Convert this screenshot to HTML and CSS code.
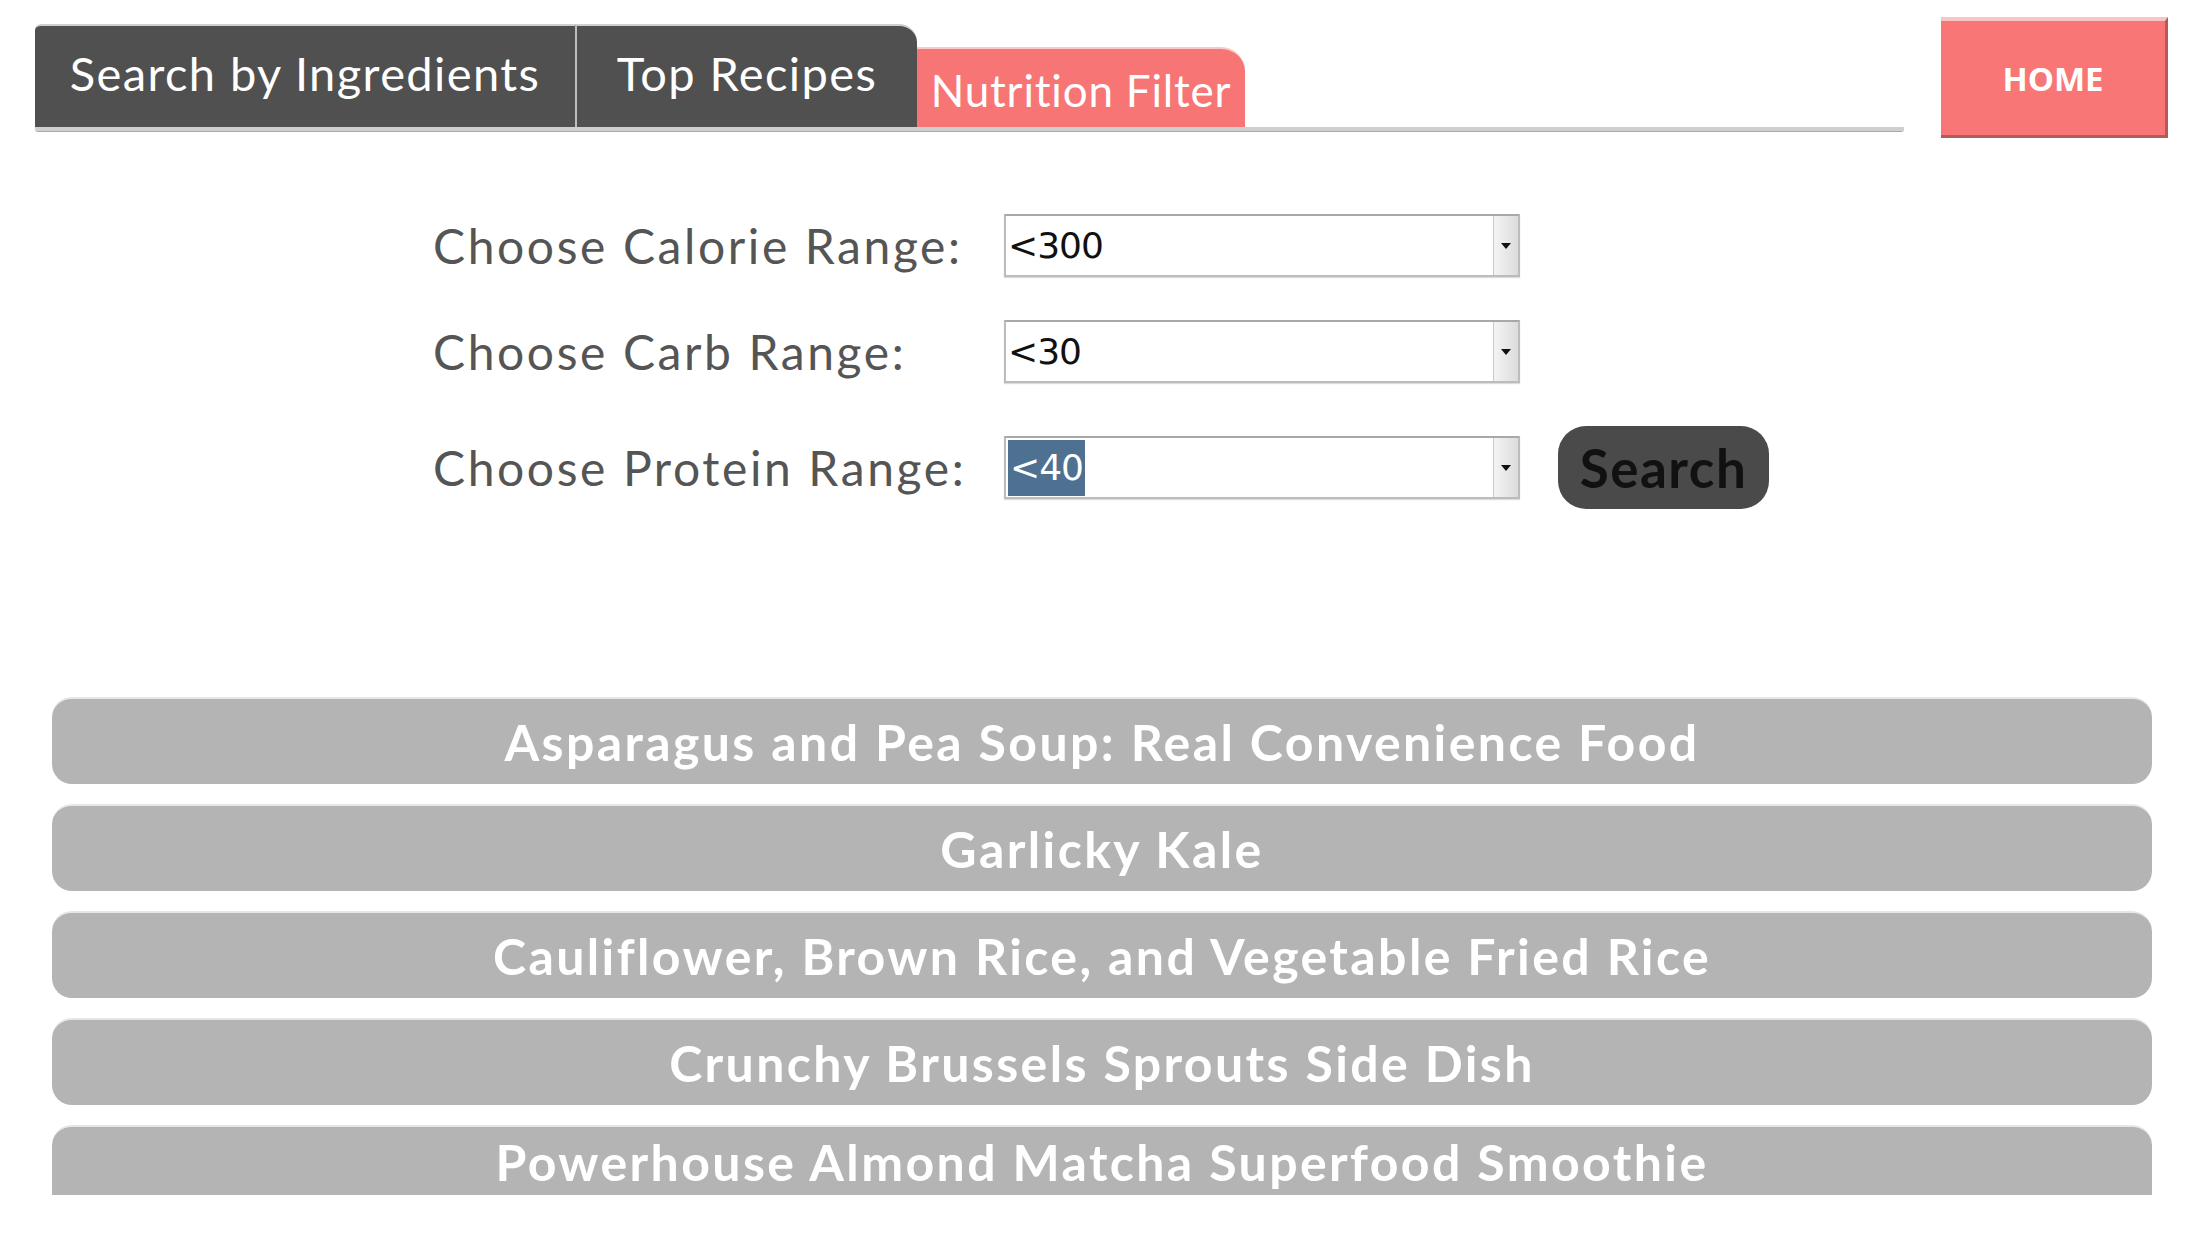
FILE: index.html
```html
<!DOCTYPE html>
<html>
<head>
<meta charset="utf-8">
<link rel="stylesheet" href="styles.css">
</head>
<body>
<div class="page">
  <header class="header">
    <nav class="tabbar">
      <div class="tab tab-dark tab-first">Search by Ingredients</div>
      <div class="tab tab-dark tab-second">Top Recipes</div>
      <div class="tab tab-active">Nutrition Filter</div>
    </nav>
    <button class="home">HOME</button>
  </header>

  <section class="filters">
    <div class="row">
      <label class="label">Choose Calorie Range:</label>
      <div class="select"><span class="value">&lt;300</span><span class="arrow"><span class="tri"></span></span></div>
    </div>
    <div class="row">
      <label class="label">Choose Carb Range:</label>
      <div class="select"><span class="value">&lt;30</span><span class="arrow"><span class="tri"></span></span></div>
    </div>
    <div class="row row-last">
      <label class="label">Choose Protein Range:</label>
      <div class="select"><span class="value"><span class="hl">&lt;40</span></span><span class="arrow"><span class="tri"></span></span></div>
      <button class="search">Search</button>
    </div>
  </section>

  <section class="results">
    <div class="item">Asparagus and Pea Soup: Real Convenience Food</div>
    <div class="item">Garlicky Kale</div>
    <div class="item">Cauliflower, Brown Rice, and Vegetable Fried Rice</div>
    <div class="item">Crunchy Brussels Sprouts Side Dish</div>
    <div class="item item-partial">Powerhouse Almond Matcha Superfood Smoothie</div>
  </section>
</div>
</body>
</html>
```

FILE: styles.css
```css
* { box-sizing: border-box; }
html, body { margin: 0; padding: 0; background: #fff; }
body { font-family: Lato, "Open Sans", sans-serif; width: 2205px; height: 1239px; overflow: hidden; }

.page { display: flex; flex-direction: column; }

.header {
  display: flex;
  align-items: flex-start;
  padding: 17px 37px 0 35px;
  gap: 37px;
}

.tabbar {
  width: 1869px;
  height: 114px;
  display: flex;
  align-items: flex-end;
  padding-top: 7px;
  border-bottom: 4px solid #cfcfcf;
  box-shadow: 0 1px 0 #a9a9a9;
  border-radius: 0 0 3px 3px;
}

.tab {
  color: #fff;
  font-size: 47px;
  font-weight: 400;
  display: flex;
  align-items: center;
  justify-content: center;
  letter-spacing: 1.4px;
}

.tab-dark {
  background: #505050;
  height: 103px;
  border-top: 2px solid #cfcfcf;
  padding-bottom: 8px;
}

.tab-first {
  width: 542px;
  border-radius: 6px 0 0 0;
  border-right: 2px solid #bdbdbd;
}

.tab-second {
  width: 340px;
  border-radius: 0 18px 0 0;
}

.tab-active {
  background: #f87575;
  width: 328px;
  height: 80px;
  border-top: 2px solid #f9c9c9;
  border-radius: 0 24px 0 0;
  padding-top: 4px;
  font-size: 44px;
  letter-spacing: 0.8px;
}

.home {
  width: 227px;
  height: 121px;
  background: #f87676;
  border: none;
  border-top: 4px solid #f9c4c4;
  border-right: 3px solid #b35a5a;
  border-bottom: 3px solid #b35a5a;
  color: #fff;
  font-family: "Open Sans", sans-serif;
  font-weight: 700;
  font-size: 33px;
  padding: 0;
}

.filters {
  display: flex;
  flex-direction: column;
  gap: 43px;
  padding-left: 433px;
  margin-top: 76px;
}

.row {
  display: flex;
  align-items: center;
  height: 63px;
}

.row-last { height: 83px; }

.label {
  width: 571px;
  font-size: 48px;
  color: #555;
  font-weight: 400;
  letter-spacing: 2.6px;
}

.select {
  width: 516px;
  height: 63px;
  border: 2px solid #bcbcbc;
  border-top-color: #a8a8a8;
  box-shadow: 0 1px 1px #ddd;
  display: flex;
  background: #fff;
}

.value {
  flex: 1;
  display: flex;
  align-items: center;
  padding-left: 2px;
  font-family: "DejaVu Sans", sans-serif;
  font-size: 36px;
  color: #111;
  letter-spacing: -1px;
}

.hl {
  background: #4e7192;
  color: #fff;
  padding: 6px 2px 6px 2px;
  line-height: 44px;
}

.arrow {
  width: 25px;
  border-left: 1px solid #c9c9c9;
  background: linear-gradient(to right, #f4f4f4, #dcdcdc);
  display: flex;
  align-items: center;
  justify-content: center;
}

.tri {
  width: 0; height: 0;
  border-left: 5px solid transparent;
  border-right: 5px solid transparent;
  border-top: 6px solid #111;
}

.search {
  margin-left: 38px;
  width: 211px;
  height: 83px;
  background: #4a4a4a;
  border: none;
  border-radius: 28px;
  color: #111;
  font-family: Lato, sans-serif;
  font-weight: 700;
  font-size: 53px;
  letter-spacing: 1.5px;
  padding: 0;
}

.results {
  margin: 188px 53px 0 52px;
  height: 498px;
  overflow: hidden;
  display: flex;
  flex-direction: column;
  gap: 20px;
}

.item {
  flex: none;
  height: 87px;
  background: #b4b4b4;
  border-top: 2px solid #e6e6e6;
  border-radius: 20px;
  color: #fff;
  font-size: 50px;
  font-weight: 700;
  display: flex;
  align-items: center;
  justify-content: center;
  letter-spacing: 2.4px;
}

.item-partial {
  height: 71px;
  border-radius: 20px 20px 0 0;
}
```
